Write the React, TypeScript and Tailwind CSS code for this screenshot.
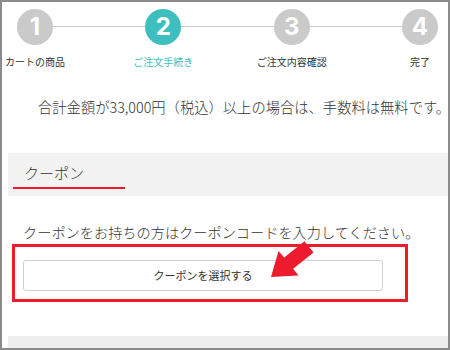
import React from 'react';

const steps = [
  { num: '1', label: 'カートの商品', active: false },
  { num: '2', label: 'ご注文手続き', active: true },
  { num: '3', label: 'ご注文内容確認', active: false },
  { num: '4', label: '完了', active: false },
];

const Step: React.FC<{ num: string; label: string; active: boolean }> = ({ num, label, active }) => (
  <div className="flex flex-col items-center w-9 shrink-0">
    <div
      className={`w-9 h-9 rounded-full flex items-center justify-center text-white font-bold text-[24px] leading-none font-['Inter',sans-serif] ${
        active ? 'bg-[#3dbfc0]' : 'bg-[#cacaca]'
      }`}
    >
      {num}
    </div>
    <span
      className={`mt-[10px] text-[10px] leading-[14px] whitespace-nowrap ${
        active ? 'text-[#3dbfc0]' : 'text-[#333]'
      }`}
    >
      {label}
    </span>
  </div>
);

export default function App() {
  return (
    <div className="relative w-[450px] h-[350px] overflow-hidden bg-white border-2 border-[#8a8a8a] font-['Noto_Sans_CJK_JP','Noto_Sans',sans-serif] text-[#333] flex flex-col">
      {/* progress */}
      <div className="flex items-start mt-[7px] ml-[15px] mr-[10px]">
        {steps.map((s, i) => (
          <React.Fragment key={s.num}>
            <Step {...s} />
            {i < steps.length - 1 && <div className="flex-1 h-px bg-[#cccccc] mt-[17px]" />}
          </React.Fragment>
        ))}
      </div>

      <p className="mt-[28px] pl-[36px] text-[14.3px] leading-[20px] whitespace-nowrap font-light">
        合計金額が33,000円（税込）以上の場合は、手数料は無料です。
      </p>

      <div className="mt-[36px] ml-[6px] h-[43px] bg-[#f2f2f2] pt-[10px]">
        <div className="ml-[5px] w-[112px] pl-[11px] pb-[4px] border-b-2 border-[#ec1c2e]">
          <h2 className="text-[15px] leading-[20px] font-light">クーポン</h2>
        </div>
      </div>

      <p className="mt-[26px] ml-[21px] text-[14.2px] leading-[20px] whitespace-nowrap font-light">
        クーポンをお持ちの方はクーポンコードを入力してください。
      </p>

      <div className="mt-[2px] ml-[10px] w-[396px] border-[3px] border-[#ec1c2e] pt-[13px] pb-[8px] pl-[8px]">
        <button className="w-[360px] h-[31px] bg-white border border-[#cfcfcf] rounded-[3px] text-[11px] text-[#333] flex items-center justify-center">
          クーポンを選択する
        </button>
      </div>

      <div className="mt-[34px] ml-[6px] flex-1 bg-[#eeeeee]" />

      {/* red arrow */}
      <svg className="absolute left-[264px] top-[236px]" width="52" height="44" viewBox="0 0 52 44">
        <polygon
          points="5,39 32.5,37.5 27.2,30.8 47.5,14.5 38.5,3.2 18.2,19.5 12.5,13"
          fill="#ec1c2e"
        />
      </svg>
    </div>
  );
}
